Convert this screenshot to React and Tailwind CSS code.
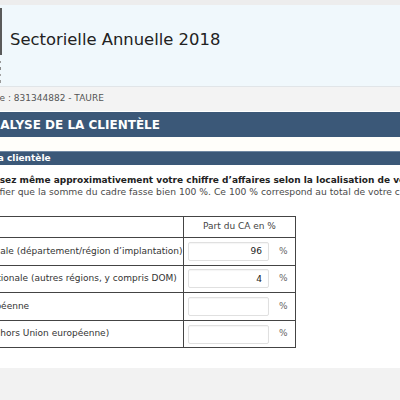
import React from "react";

const rows = [
    { label: "Locale (département/région d’implantation)", shift: "ml-0", value: "96" },
    { label: "Nationale (autres régions, y compris DOM)", shift: "ml-0", value: "4" },
    { label: "Européenne", shift: "-ml-[10px]", value: "" },
    { label: "Internationale (hors Union européenne)", shift: "-ml-[54px]", value: "" },
];

function Logo() {
    // only the right edge of the logo shows in the viewport
    return (
        <svg width="3" height="82" className="shrink-0">
            <rect x="0" y="3" width="2" height="47" fill="#5a5a5a" />
            <rect x="0" y="56" width="1" height="2" fill="#9a9a9a" />
            <rect x="0" y="62" width="1" height="3" fill="#8a8a8a" />
            <rect x="0" y="69" width="1" height="2" fill="#a5a5a5" />
            <rect x="0" y="75" width="1" height="3" fill="#9a9a9a" />
        </svg>
    );
}

export default function App() {
    return (
        <div className="w-[400px] h-[400px] overflow-hidden bg-white font-['DejaVu_Sans',sans-serif] text-[#333]">
            <div className="h-[5px] bg-[#ededed]" />
            <div className="h-[82px] bg-[#f0f8fc] border-b border-[#e1e5e8] flex items-start">
                <Logo />
                <h1 className="ml-[7px] mt-[25px] text-[16.4px] leading-[20px] text-[#222] whitespace-nowrap">
                    Sectorielle Annuelle 2018
                </h1>
            </div>
            <div className="h-[24px] bg-[#f3f3f3] flex items-center text-[9px] text-[#555] whitespace-nowrap">
                <span className="-ml-[41px]">Entreprise : 831344882 - TAURE</span>
            </div>
            <div className="h-px bg-white" />
            <div className="h-[25px] bg-[#3b5878] flex items-center text-white font-bold text-[12px] whitespace-nowrap">
                <span className="-ml-[19px]">ANALYSE DE LA CLIENTÈLE</span>
            </div>
            <div className="h-[14px] bg-[#fffefa]" />
            <div className="h-[14px] bg-[#3b5878] border-t border-[#6f87a2] flex items-center text-white font-bold text-[9px] whitespace-nowrap">
                <span className="-ml-[85px]">Localisation de la clientèle</span>
            </div>

            <div className="mt-[10px] leading-[11px] whitespace-nowrap">
                <p className="-ml-[43px] font-bold text-[9px] text-[#222]">
                    Répartissez même approximativement votre chiffre d’affaires selon la localisation de votre clientèle
                </p>
                <p className="-ml-[56px] text-[9.2px] text-[#4a4a4a]">
                    Veuillez vérifier que la somme du cadre fasse bien 100 %. Ce 100 % correspond au total de votre chiffre d’affaires.
                </p>
            </div>

            <table className="mt-[19px] -ml-[20px] border-collapse text-[9px] text-[#333]">
                <tbody>
                    <tr className="h-[21px]">
                        <td className="w-[203px] border border-[#444]" />
                        <td className="w-[112px] border border-[#444] text-center text-[#444]">Part du CA en %</td>
                    </tr>
                    {rows.map((row) => (
                        <tr key={row.label} className="h-[27.6px]">
                            <td className="border border-[#444] pl-[4px] whitespace-nowrap">
                                <span className={`block ${row.shift}`}>{row.label}</span>
                            </td>
                            <td className="border border-[#444] pl-[4px]">
                                <div className="flex items-center">
                                    <input
                                        readOnly
                                        value={row.value}
                                        className="w-[81px] h-[19px] border border-[#e0e0e0] rounded-[2px] bg-white text-right pr-[6px] text-[9px] text-[#222] outline-none shadow-[inset_0_1px_1px_rgba(0,0,0,0.04)]"
                                    />
                                    <span className="ml-[10px] text-[#666]">%</span>
                                </div>
                            </td>
                        </tr>
                    ))}
                </tbody>
            </table>

            <div className="mt-[20px] h-[40px] bg-[#f2f2f2]" />
        </div>
    );
}
